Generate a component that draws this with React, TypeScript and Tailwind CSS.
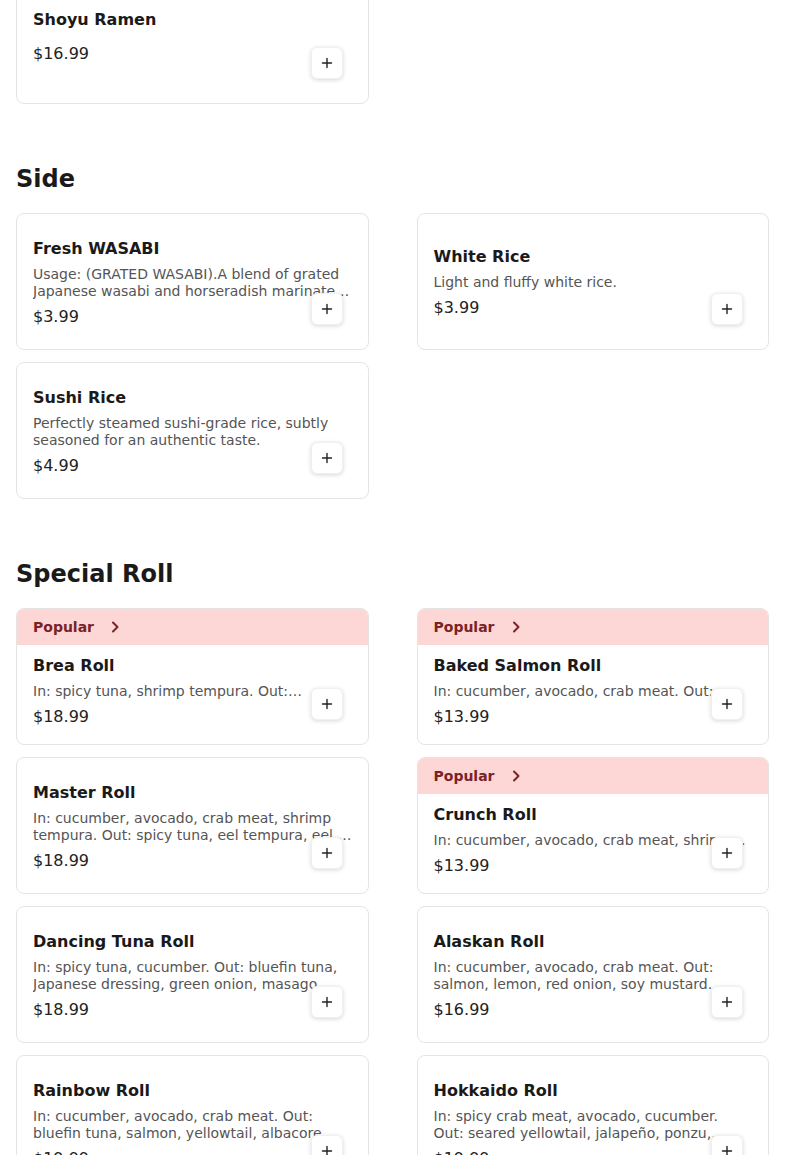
import React from "react";

type Item = { name: string; desc?: string; price: string; popular?: boolean };

const ramen: Item[] = [{ name: "Shoyu Ramen", price: "$16.99" }];

const side: Item[] = [
  {
    name: "Fresh WASABI",
    desc: "Usage: (GRATED WASABI).A blend of grated Japanese wasabi and horseradish marinated in soy sauce and sake.",
    price: "$3.99",
  },
  { name: "White Rice", desc: "Light and fluffy white rice.", price: "$3.99" },
  {
    name: "Sushi Rice",
    desc: "Perfectly steamed sushi-grade rice, subtly seasoned for an authentic taste.",
    price: "$4.99",
  },
];

const special: Item[] = [
  {
    name: "Brea Roll",
    desc: "In: spicy tuna, shrimp tempura. Out: albacore, crispy onion, ponzu sauce, spicy mayo.",
    price: "$18.99",
    popular: true,
  },
  {
    name: "Baked Salmon Roll",
    desc: "In: cucumber, avocado, crab meat. Out: baked salmon, eel sauce, spicy mayo.",
    price: "$13.99",
    popular: true,
  },
  {
    name: "Master Roll",
    desc: "In: cucumber, avocado, crab meat, shrimp tempura. Out: spicy tuna, eel tempura, eel, avocado, eel sauce.",
    price: "$18.99",
  },
  {
    name: "Crunch Roll",
    desc: "In: cucumber, avocado, crab meat, shrimp tempura. Out: crunch flakes, eel sauce.",
    price: "$13.99",
    popular: true,
  },
  {
    name: "Dancing Tuna Roll",
    desc: "In: spicy tuna, cucumber. Out: bluefin tuna, Japanese dressing, green onion, masago, sesame seeds.",
    price: "$18.99",
  },
  {
    name: "Alaskan Roll",
    desc: "In: cucumber, avocado, crab meat. Out: salmon, lemon, red onion, soy mustard.",
    price: "$16.99",
  },
  {
    name: "Rainbow Roll",
    desc: "In: cucumber, avocado, crab meat. Out: bluefin tuna, salmon, yellowtail, albacore, shrimp.",
    price: "$19.99",
  },
  {
    name: "Hokkaido Roll",
    desc: "In: spicy crab meat, avocado, cucumber. Out: seared yellowtail, jalapeño, ponzu, garlic chips.",
    price: "$19.99",
  },
];

function PlusButton() {
  return (
    <button className="absolute bottom-6 right-[25px] flex h-8 w-8 items-center justify-center rounded-md border border-[#f0f0f0] bg-white shadow-[0_1px_4px_rgba(0,0,0,0.16)]">
      <svg width="12" height="12" viewBox="0 0 12 12" fill="none">
        <path d="M6 1.5v9M1.5 6h9" stroke="#222" strokeWidth="1.4" strokeLinecap="round" />
      </svg>
    </button>
  );
}

function Card({ item }: { item: Item }) {
  return (
    <div className="relative flex h-[137px] flex-col overflow-hidden rounded-lg border border-[#e4e4e4] bg-white">
      {item.popular && (
        <div className="flex h-9 shrink-0 items-center bg-[#fdd6d6] px-4">
          <span className="text-sm font-bold leading-5 text-[#7a2226]">Popular</span>
          <svg className="ml-[16px]" width="10" height="12" viewBox="0 0 10 12" fill="none">
            <path d="M3 1.5 7.5 6 3 10.5" stroke="#7a2226" strokeWidth="2" strokeLinecap="round" strokeLinejoin="round" />
          </svg>
        </div>
      )}
      <div
        className={
          item.popular
            ? "flex flex-1 flex-col gap-[5px] px-4 pt-[9px]"
            : "flex flex-1 flex-col justify-center gap-[5px] px-4 pt-[2px]"
        }
      >
        <div className="text-base font-bold leading-6 text-[#1a1a1a]">{item.name}</div>
        <div
          className={
            (item.popular ? "line-clamp-1 " : "line-clamp-2 ") +
            "text-sm leading-[17px] text-[#555555]"
          }
        >
          {item.desc}
        </div>
        <div className="text-base leading-6 text-[#222222]">{item.price}</div>
      </div>
      <PlusButton />
    </div>
  );
}

function Section({ title, items }: { title?: string; items: Item[] }) {
  return (
    <section>
      {title && (
        <h2 className="mb-[18px] mt-[59px] text-2xl font-bold leading-8 text-[#1a1a1a]">{title}</h2>
      )}
      <div className="grid grid-cols-2 gap-x-12 gap-y-3">
        {items.map((it) => (
          <Card key={it.name} item={it} />
        ))}
      </div>
    </section>
  );
}

export default function App() {
  return (
    <div className="h-[1155px] overflow-hidden bg-white font-['DejaVu_Sans',sans-serif]">
      <div className="-mt-[33px] px-4">
        <Section items={ramen} />
        <Section title="Side" items={side} />
        <Section title="Special Roll" items={special} />
      </div>
    </div>
  );
}
